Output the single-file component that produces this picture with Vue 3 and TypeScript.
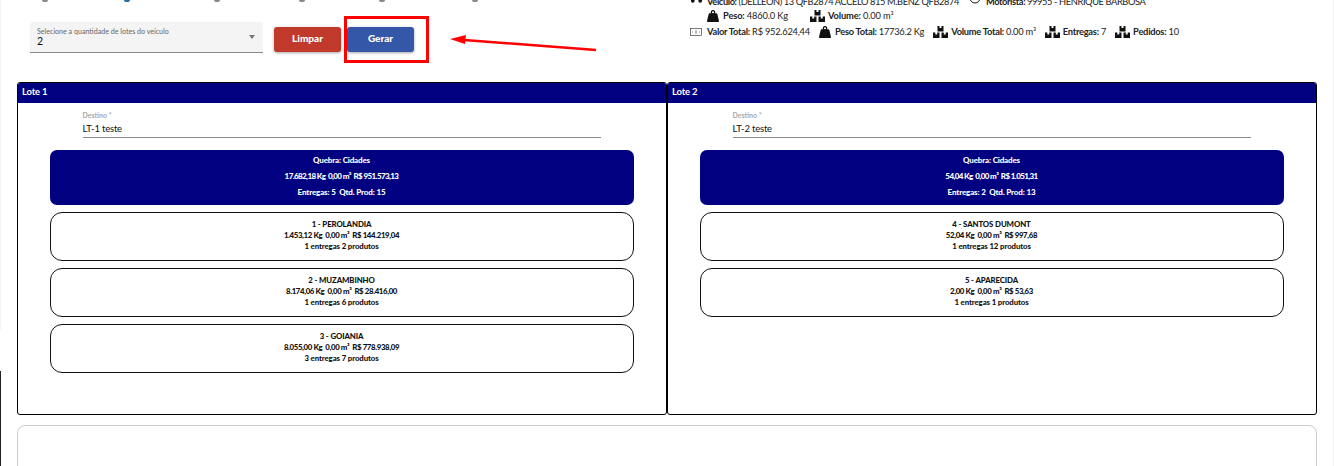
<script setup lang="ts">
interface City {
  title: string
  totals: string
  counts: string
}

interface Lot {
  name: string
  dest: string
  summary: string
  summaryCounts: string
  cities: City[]
}

const lots: Lot[] = [
  {
    name: 'Lote 1',
    dest: 'LT-1 teste',
    summary: '17.682,18 Kg  0,00 m³  R$ 951.573,13',
    summaryCounts: 'Entregas: 5  Qtd. Prod: 15',
    cities: [
      { title: '1 - PEROLANDIA', totals: '1.453,12 Kg  0,00 m³  R$ 144.219,04', counts: '1 entregas 2 produtos' },
      { title: '2 - MUZAMBINHO', totals: '8.174,06 Kg  0,00 m³  R$ 28.416,00', counts: '1 entregas 6 produtos' },
      { title: '3 - GOIANIA', totals: '8.055,00 Kg  0,00 m³  R$ 778.938,09', counts: '3 entregas 7 produtos' },
    ],
  },
  {
    name: 'Lote 2',
    dest: 'LT-2 teste',
    summary: '54,04 Kg  0,00 m³  R$ 1.051,31',
    summaryCounts: 'Entregas: 2  Qtd. Prod: 13',
    cities: [
      { title: '4 - SANTOS DUMONT', totals: '52,04 Kg  0,00 m³  R$ 997,68', counts: '1 entregas 12 produtos' },
      { title: '5 - APARECIDA', totals: '2,00 Kg  0,00 m³  R$ 53,63', counts: '1 entregas 1 produtos' },
    ],
  },
]

// bottoms of the stepper circles that the crop cuts off
const steps = [
  { left: 42, color: '#888' },
  { left: 124, color: '#1f6fa8' },
  { left: 214, color: '#888' },
  { left: 299, color: '#888' },
  { left: 379, color: '#888' },
  { left: 472, color: '#888' },
]

const weightPath = 'M6 0a2.2 2.2 0 0 1 2 3.2h1.4c.5 0 .8.3.9.7L12 11c.1.5-.3 1-.8 1H.8c-.5 0-.9-.5-.8-1l1.7-7.1c.1-.4.4-.7.9-.7H4A2.2 2.2 0 0 1 6 0zm0 1.2a1 1 0 1 0 0 2 1 1 0 0 0 0-2z'
const boxesPath = 'M4.5 0H6.5V2H8.5V0H10.5V5.5H4.5ZM0 6.5H2.3V8.5H4.2V6.5H6.5V12H0ZM8.5 6.5H10.8V8.5H12.7V6.5H15V12H8.5Z'
</script>

<template>
  <div class="page">
    <div class="top">
      <div class="form">
        <div class="select">
          <span class="select-label">Selecione a quantidade de lotes do veículo</span>
          <span class="select-value">2</span>
          <i class="caret"></i>
        </div>
        <button class="btn red">Limpar</button>
        <button class="btn blue">Gerar</button>
      </div>
      <div class="info">
        <div class="line first">
          <svg class="ico truck" viewBox="0 0 14 12"><path d="M0 0h9v8H0zM9 2h3l2 3v3H9z" /><circle cx="3" cy="9" r="2" /><circle cx="11" cy="9" r="2" /></svg>
          <span class="txt"><b>Veículo:</b> (DELLEON) 13 QFB2874 ACCELO 815 M.BENZ QFB2874</span>
          <svg class="ico ring" viewBox="0 0 12 12"><circle cx="6" cy="6" r="5" /></svg>
          <span class="txt"><b>Motorista:</b> 99955 - HENRIQUE BARBOSA</span>
        </div>
        <div class="line second">
          <svg class="ico weight" viewBox="0 0 12 12"><path :d="weightPath" /></svg>
          <span class="txt peso"><b>Peso:</b> 4860.0 Kg</span>
          <svg class="ico boxes" viewBox="0 0 15 12"><path :d="boxesPath" /></svg>
          <span class="txt"><b>Volume:</b> 0.00 m³</span>
        </div>
        <div class="line third">
          <svg class="ico bill" viewBox="0 0 12 8"><rect x=".5" y=".5" width="11" height="7" /><path d="M6 2v4M2 4h1M9 4h1" /></svg>
          <span class="txt"><b>Valor Total:</b> R$ 952.624,44</span>
          <svg class="ico weight" viewBox="0 0 12 12"><path :d="weightPath" /></svg>
          <span class="txt"><b>Peso Total:</b> 17736.2 Kg</span>
          <svg class="ico boxes" viewBox="0 0 15 12"><path :d="boxesPath" /></svg>
          <span class="txt"><b>Volume Total:</b> 0.00 m³</span>
          <svg class="ico boxes" viewBox="0 0 15 12"><path :d="boxesPath" /></svg>
          <span class="txt"><b>Entregas:</b> 7</span>
          <svg class="ico boxes" viewBox="0 0 15 12"><path :d="boxesPath" /></svg>
          <span class="txt"><b>Pedidos:</b> 10</span>
        </div>
      </div>
    </div>

    <div class="lots">
      <section v-for="lot in lots" :key="lot.name" class="lot">
        <header class="lot-head">{{ lot.name }}</header>
        <div class="dest">
          <span class="dest-label">Destino *</span>
          <span class="dest-value">{{ lot.dest }}</span>
        </div>
        <div class="cards">
          <div class="summary">
            <p>Quebra: Cidades</p>
            <p class="nums">{{ lot.summary }}</p>
            <p>{{ lot.summaryCounts }}</p>
          </div>
          <div v-for="city in lot.cities" :key="city.title" class="city">
            <p>{{ city.title }}</p>
            <p class="nums">{{ city.totals }}</p>
            <p>{{ city.counts }}</p>
          </div>
        </div>
      </section>
    </div>

    <div class="bottom-card"></div>

    <i
      v-for="step in steps"
      :key="step.left"
      class="step"
      :style="{ left: step.left + 'px', background: step.color }"
    ></i>
    <div class="annot-box"></div>
    <svg class="annot-arrow" width="160" height="24" viewBox="0 0 160 24">
      <path d="M150 17 L18 7" stroke="#f00" stroke-width="2.5" />
      <path d="M4 6 L20 2 L19 11 Z" fill="#f00" />
    </svg>
    <i class="edge-left"></i>
    <i class="edge-right"></i>
    <i class="edge-dark"></i>
  </div>
</template>

<style scoped>
.page {
  position: relative;
  width: 1334px;
  height: 466px;
  overflow: hidden;
  background: #fff;
  color: #111;
  font-family: Lato, "Noto Sans", sans-serif;
}

p {
  margin: 0;
  white-space: pre;
}

.top {
  display: flex;
  height: 82px;
}

.form {
  display: flex;
  align-items: flex-start;
  width: 690px;
  padding: 22px 0 0 30px;
  box-sizing: border-box;
}

.select {
  position: relative;
  display: flex;
  flex-direction: column;
  width: 233px;
  height: 31px;
  padding: 5px 7px 0;
  box-sizing: border-box;
  background: #f4f4f4;
  border-bottom: 1px solid #8a8a8a;
  border-radius: 3px 3px 0 0;
}

.select-label {
  font-size: 7.1px;
  line-height: 9px;
  color: #666;
}

.select-value {
  margin-top: -1px;
  font-size: 10.5px;
  line-height: 12px;
}

.caret {
  position: absolute;
  top: 13px;
  right: 8px;
  border: 3.5px solid transparent;
  border-top: 4px solid #777;
  border-bottom: 0;
}

.btn {
  width: 67px;
  height: 25px;
  margin-top: 5px;
  padding: 0 0 3px;
  border: 0;
  border-radius: 3px;
  color: #fff;
  font: 900 10px Lato, sans-serif;
  box-shadow: 0 1px 3px rgba(0, 0, 0, 0.35);
}

.red {
  margin-left: 11px;
  background: #c0392b;
}

.blue {
  margin-left: 6px;
  background: #3557a8;
}

.info {
  display: flex;
  flex-direction: column;
  font-size: 9.3px;
  letter-spacing: -0.15px;
  line-height: 13px;
  color: #222;
}

.line {
  display: flex;
  align-items: center;
  height: 13px;
  white-space: nowrap;
}

.line b {
  font-weight: 700;
}

.first {
  margin-top: -5px;
  letter-spacing: -0.4px;
}

.second {
  margin: 1px 0 0 17px;
}

.third {
  margin-top: 3px;
  letter-spacing: -0.25px;
}

.ico {
  flex: none;
  height: 12px;
  fill: #111;
}

.weight {
  width: 12px;
  margin-right: 4px;
}

.boxes {
  width: 15px;
  margin-right: 3px;
}

.truck {
  width: 13px;
  margin: -8px 4px 0 0;
}

.ring {
  width: 12px;
  margin: -8px 5px 0 10px;
  fill: none;
  stroke: #111;
}

.bill {
  width: 12px;
  height: 8px;
  margin-right: 5px;
  fill: none;
  stroke: #444;
  stroke-width: 0.7;
}

.peso {
  margin-right: 22px;
}

.third .txt {
  margin-right: 9px;
}

.lots {
  display: grid;
  grid-template-columns: 650px 650px;
  margin-left: 17px;
}

.lot {
  height: 333px;
  box-sizing: border-box;
  border: 1.5px solid #000;
  border-radius: 3px;
  overflow: hidden;
}

.lot-head {
  height: 20px;
  padding-left: 4px;
  background: #000080;
  color: #fff;
  font-size: 9.5px;
  font-weight: 700;
  letter-spacing: -0.2px;
  line-height: 18px;
}

.dest {
  display: flex;
  flex-direction: column;
  width: 518px;
  height: 35px;
  margin-left: 64.5px;
  padding-top: 8px;
  box-sizing: border-box;
  border-bottom: 1px solid #8a8a8a;
}

.dest-label {
  font-size: 7px;
  font-weight: 700;
  line-height: 9px;
  color: #aaa;
}

.dest-value {
  margin-top: 2px;
  font-size: 9.5px;
  letter-spacing: -0.2px;
  line-height: 13px;
}

.cards {
  display: flex;
  flex-direction: column;
  gap: 7px;
  margin: 12px 32.5px 0 31.5px;
}

.summary {
  display: flex;
  flex-direction: column;
  justify-content: center;
  gap: 5px;
  height: 55px;
  padding-bottom: 2px;
  box-sizing: border-box;
  border-radius: 7px;
  background: #000080;
  color: #fff;
  font-size: 8px;
  font-weight: 900;
  letter-spacing: -0.15px;
  line-height: 11px;
  text-align: center;
}

.city {
  display: flex;
  flex-direction: column;
  justify-content: center;
  height: 49px;
  padding-bottom: 2px;
  box-sizing: border-box;
  border: 1px solid #111;
  border-radius: 12px;
  color: #111;
  font-size: 7.8px;
  font-weight: 900;
  letter-spacing: -0.1px;
  line-height: 11px;
  text-align: center;
}

.summary .nums {
  letter-spacing: -0.6px;
}

.city .nums {
  letter-spacing: -0.35px;
}

.bottom-card {
  height: 60px;
  margin: 10px 17px 0;
  box-sizing: border-box;
  border: 1px solid #ccc;
  border-radius: 8px;
}

.step {
  position: absolute;
  top: 0;
  width: 6px;
  height: 1.5px;
  border-radius: 0 0 3px 3px;
}

.annot-box {
  position: absolute;
  top: 16px;
  left: 344px;
  width: 85px;
  height: 47px;
  box-sizing: border-box;
  border: 3px solid #f00;
}

.annot-arrow {
  position: absolute;
  top: 33px;
  left: 446px;
}

.edge-left,
.edge-right,
.edge-dark {
  position: absolute;
  width: 1px;
}

.edge-left {
  top: 0;
  left: 0;
  height: 330px;
  background: #f3f3f3;
}

.edge-right {
  top: 0;
  right: 0;
  height: 466px;
  background: #f3f3f3;
}

.edge-dark {
  top: 371px;
  left: 0;
  height: 95px;
  background: #222;
}
</style>
